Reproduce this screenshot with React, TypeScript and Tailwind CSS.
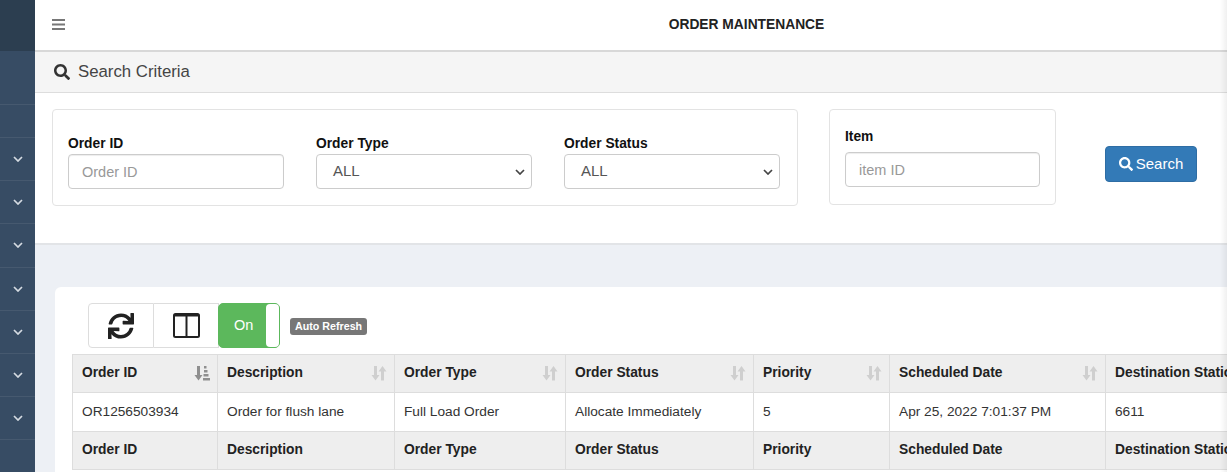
import { ReactNode } from 'react';
import { FaSearch, FaSync } from 'react-icons/fa';

const columns = [
  { title: 'Order ID', value: 'OR1256503934', width: 'w-[146px]' },
  { title: 'Description', value: 'Order for flush lane', width: 'w-[177px]' },
  { title: 'Order Type', value: 'Full Load Order', width: 'w-[171px]' },
  { title: 'Order Status', value: 'Allocate Immediately', width: 'w-[188px]' },
  { title: 'Priority', value: '5', width: 'w-[136px]' },
  { title: 'Scheduled Date', value: 'Apr 25, 2022 7:01:37 PM', width: 'w-[216px]' },
  { title: 'Destination Station', value: '6611', width: 'w-[160px]' },
];

const sidebarRows = [false, true, true, true, true, true, true, true];

function Chevron({ className, color }: { className?: string; color: string }) {
  return (
    <svg width="10" height="6" viewBox="0 0 10 6" fill="none" className={className}>
      <path d="M1 1l4 4 4-4" stroke={color} strokeWidth="1.700" />
    </svg>
  );
}

function SortIcon({ active }: { active?: boolean }) {
  return (
    <svg width="16" height="16" viewBox="0 0 16 16" className="absolute right-[7px] top-[10px]">
      <g fill={active ? '#8f8f8f' : '#cfcfcf'}>
        <path d="M3 1h3v9h2.500L4.500 15.500 .5 10H3z" />
        {active ? (
          <>
            <rect x="10" y="1" width="2.500" height="2.500" />
            <rect x="10" y="5" width="3.500" height="2.500" />
            <rect x="9.500" y="9" width="5" height="2.500" />
            <rect x="9" y="13" width="7" height="2.500" />
          </>
        ) : (
          <path d="M10 15.500h3v-9h2.500L11.500 1 7.500 6.500H10z" />
        )}
      </g>
    </svg>
  );
}

function Field({ label, children, gap }: { label: string; children: ReactNode; gap: string }) {
  return (
    <div>
      <div className={`text-[13.800px] leading-[20px] font-bold text-[#111] ${gap}`}>{label}</div>
      {children}
    </div>
  );
}

function TextBox({ placeholder, width }: { placeholder: string; width: string }) {
  return (
    <input
      placeholder={placeholder}
      className={`${width} block h-[35px] border border-[#ccc] rounded-[4px] px-[13px] text-[14.500px] bg-white placeholder:text-[#999] shadow-[inset_0_1px_1px_rgba(0,0,0,0.075)]`}
    />
  );
}

function SelectBox() {
  return (
    <div className="relative w-[216px] h-[35px] border border-[#ccc] rounded-[4px] bg-white flex items-center pl-[16px] text-[15px] text-[#555]">
      ALL
      <Chevron color="#444" className="absolute right-[6px] top-[14px]" />
    </div>
  );
}

function HeaderRow({ sortable }: { sortable?: boolean }) {
  return (
    <div className="flex h-[39px] bg-[#eee] border-y border-[#ddd] -mt-[1px] first:mt-0">
      {columns.map((col, i) => (
        <div
          key={col.title}
          className={`${col.width} shrink-0 relative border-r border-[#ddd] first:border-l pl-[9px] pb-[1px] flex items-center font-bold text-[13.800px] text-[#222] whitespace-nowrap overflow-hidden`}
        >
          {col.title}
          {sortable && i < 6 && <SortIcon active={i === 0} />}
        </div>
      ))}
    </div>
  );
}

export default function App() {
  return (
    <div className="relative flex w-[1227px] h-[472px] overflow-hidden bg-[#edf0f5] font-['Liberation_Sans',Arial,sans-serif] text-[14px] text-[#333]">
      <aside className="w-[35px] shrink-0 bg-[#374c64]">
        <div className="h-[51px] bg-[#2c3e50]" />
        <div className="h-[54px] border-b border-[#46596f]" />
        {sidebarRows.map((hasChevron, i) => (
          <div
            key={i}
            className={`${i === 0 ? 'h-[33px]' : 'h-[43.200px]'} border-b border-[#46596f] flex items-center justify-center pl-[1px]`}
          >
            {hasChevron && <Chevron color="#d5dbe2" />}
          </div>
        ))}
      </aside>

      <main className="flex-1 min-w-0">
        <header className="relative h-[52px] bg-white border-b-2 border-[#d8d8d8] flex items-center justify-center pl-[231px]">
          <svg width="13" height="11" viewBox="0 0 13 11" className="absolute left-[17px] top-[19px]">
            <path d="M0 1h13M0 5.500h13M0 10h13" stroke="#777" strokeWidth="2" />
          </svg>
          <h1 className="text-[13.800px] font-bold text-[#222] mt-[1px]">ORDER MAINTENANCE</h1>
        </header>

        <section className="h-[193px] bg-white border-b-2 border-[#e2e4e7]">
          <div className="h-[41px] bg-[#f5f5f5] border-b border-[#ddd] flex items-center pl-[19px] text-[16.800px] text-[#444] gap-[8px]">
            <FaSearch className="text-[#333] text-[16px]" />
            Search Criteria
          </div>
          <div className="flex items-start pl-[17px] pt-[16px]">
            <div className="flex w-[746px] h-[97px] border border-[#e3e3e3] rounded-[4px] pl-[15px] pt-[24px] gap-[32px]">
              <Field label="Order ID" gap="">
                <TextBox placeholder="Order ID" width="w-[216px]" />
              </Field>
              <Field label="Order Type" gap="">
                <SelectBox />
              </Field>
              <Field label="Order Status" gap="">
                <SelectBox />
              </Field>
            </div>
            <div className="w-[227px] h-[96px] ml-[31px] border border-[#e3e3e3] rounded-[4px] pl-[15px] pt-[17px]">
              <Field label="Item" gap="mb-[5px]">
                <TextBox placeholder="item ID" width="w-[195px]" />
              </Field>
            </div>
            <button className="ml-[49px] mt-[37px] w-[92px] h-[36px] bg-[#337ab7] border border-[#2e6da4] rounded-[4px] text-white text-[15px] flex items-center justify-center gap-[3px]">
              <FaSearch className="text-[14px]" />
              Search
            </button>
          </div>
        </section>

        <section className="ml-[20px] mt-[42px] h-[200px] bg-white rounded-tl-[6px] pl-[17px] pt-[16px]">
          <div className="flex items-center ml-[16px] h-[45px]">
            <button className="w-[66px] h-[45px] border border-[#ddd] rounded-l-[4px] bg-white flex items-center justify-center">
              <FaSync className="text-[#222] text-[26px]" />
            </button>
            <button className="w-[65px] h-[45px] border-y border-r border-[#ddd] bg-white flex items-center justify-center">
              <svg width="27" height="25" viewBox="0 0 27 25" fill="none" stroke="#222" strokeWidth="2">
                <rect x="1" y="1" width="25" height="23" rx="1.500" />
                <path d="M13.500 1v23" />
                <path d="M1 2.500h25" />
              </svg>
            </button>
            <div className="relative w-[62px] h-[45px] -ml-[1px] rounded-[5px] border border-[#5cb85c] bg-[#5cb85c] text-white flex items-center pl-[15px] text-[14.500px]">
              On
              <div className="absolute right-0 top-0 bottom-0 w-[13px] bg-white rounded-[4px]" />
            </div>
            <span className="ml-[10px] mt-[1px] h-[17px] px-[5px] bg-[#777] rounded-[3px] text-white text-[10.700px] leading-[17px] font-bold">
              Auto Refresh
            </span>
          </div>

          <div className="mt-[6px]">
            <HeaderRow sortable />
            <div className="flex h-[40px] -mt-[1px] border-y border-[#ddd]">
              {columns.map((col) => (
                <div
                  key={col.title}
                  className={`${col.width} shrink-0 border-r border-[#ddd] first:border-l pl-[9px] flex items-center text-[13.700px] text-[#333] whitespace-nowrap`}
                >
                  {col.value}
                </div>
              ))}
            </div>
            <HeaderRow />
          </div>
        </section>
      </main>

      <div className="absolute right-0 top-0 bottom-0 w-[7px] bg-gradient-to-r from-transparent to-[rgba(0,0,0,0.06)]" />
    </div>
  );
}
